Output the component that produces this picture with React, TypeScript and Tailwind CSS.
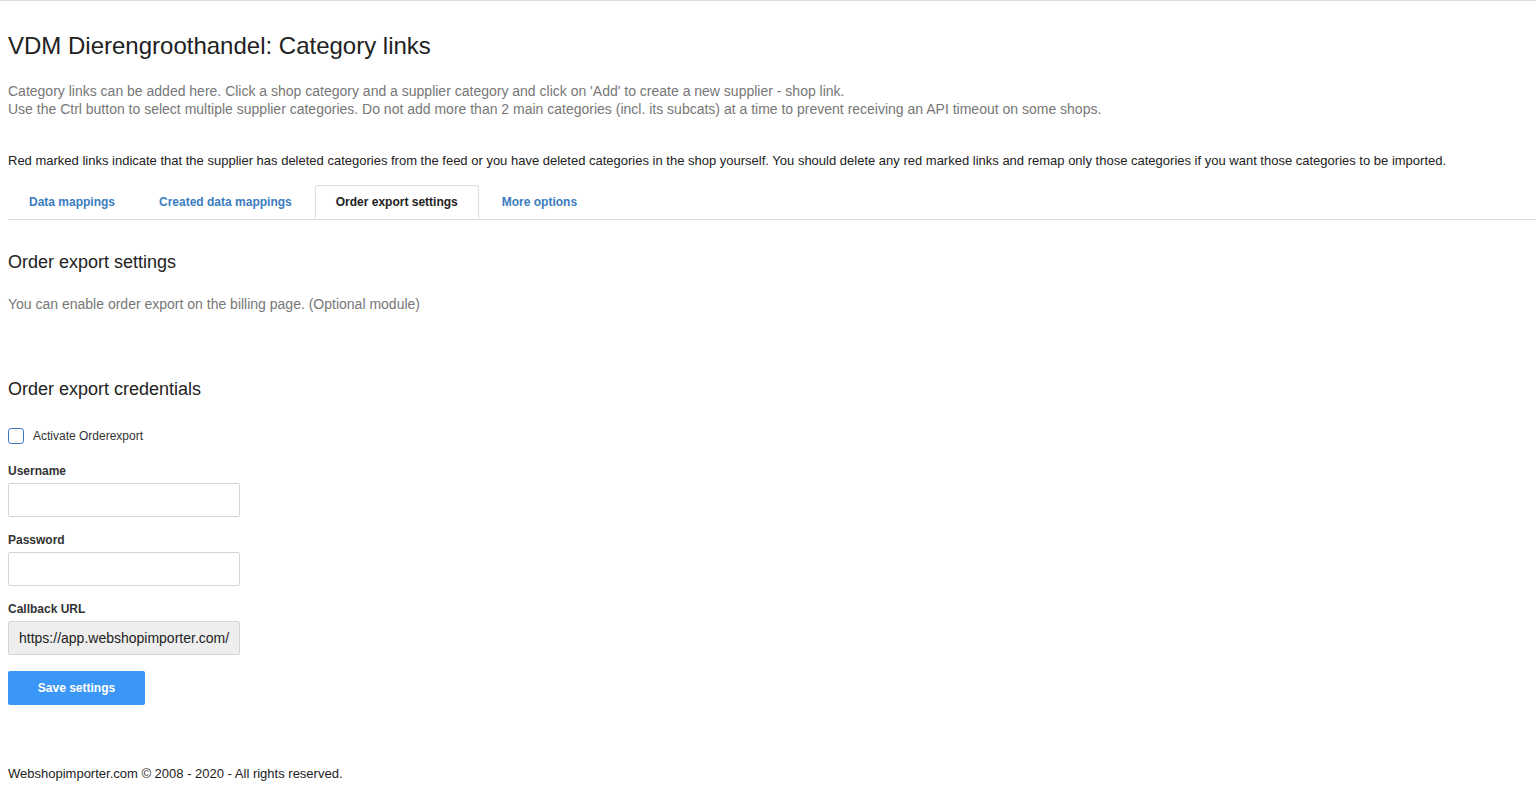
import React from "react";

export default function App() {
  return (
    <div className="min-h-[806px] bg-white border-t border-[#dddddd] font-['Liberation_Sans',Arial,sans-serif] text-[#333333]">
      <div className="px-2">
        <h1 className="pt-[30px] text-[24px] leading-[30px] text-[#222222]">VDM Dierengroothandel: Category links</h1>
        <div className="mt-[21px] text-[14px] leading-[18px] text-[#777777]">
          <p>Category links can be added here. Click a shop category and a supplier category and click on 'Add' to create a new supplier - shop link.</p>
          <p>Use the Ctrl button to select multiple supplier categories. Do not add more than 2 main categories (incl. its subcats) at a time to prevent receiving an API timeout on some shops.</p>
        </div>
        <p className="mt-[35px] text-[13px] leading-[16px] text-[#222222]">
          Red marked links indicate that the supplier has deleted categories from the feed or you have deleted categories in the shop yourself. You should delete any red marked links and remap only those categories if you want those categories to be imported.
        </p>
      </div>
      <div className="ml-2 mt-[16px] flex border-b border-[#dddddd] text-[12px] font-bold">
        <div className="mr-[2px] px-[20px] h-[34px] flex items-center text-[#3a7cc0] border border-transparent">Data mappings</div>
        <div className="mr-[2px] px-[20px] h-[34px] flex items-center text-[#3a7cc0] border border-transparent">Created data mappings</div>
        <div className="mr-[2px] px-[20px] h-[34px] -mb-px flex items-center text-[#222222] bg-white border border-[#dddddd] border-b-white rounded-t-[3px]">Order export settings</div>
        <div className="mr-[2px] px-[20px] h-[34px] flex items-center text-[#3a7cc0] border border-transparent">More options</div>
      </div>
      <div className="px-2">
        <h2 className="mt-[31px] text-[18px] leading-[22px] text-[#222222]">Order export settings</h2>
        <p className="mt-[22px] text-[14px] leading-[18px] text-[#777777]">You can enable order export on the billing page. (Optional module)</p>
        <h2 className="mt-[65px] text-[18px] leading-[22px] text-[#222222]">Order export credentials</h2>
        <label className="mt-[27px] flex items-center gap-[9px] text-[12px] text-[#333333]">
          <span className="w-4 h-4 rounded-[3px] border border-[#3f78c0] bg-white"></span>
          <span>Activate Orderexport</span>
        </label>
        <div className="mt-[19px] text-[12px] font-bold leading-[14px]">Username</div>
        <div className="mt-[5px] w-[232px] h-[34px] border border-[#d4d4d4] rounded-[2px] bg-white"></div>
        <div className="mt-[16px] text-[12px] font-bold leading-[14px]">Password</div>
        <div className="mt-[5px] w-[232px] h-[34px] border border-[#d4d4d4] rounded-[2px] bg-white"></div>
        <div className="mt-[16px] text-[12px] font-bold leading-[14px]">Callback URL</div>
        <div className="mt-[5px] w-[232px] h-[34px] border border-[#d4d4d4] rounded-[2px] bg-[#eeeeee] flex items-center px-[10px] overflow-hidden whitespace-nowrap text-[14px] text-[#222222]">https://app.webshopimporter.com/</div>
        <button className="mt-[16px] w-[137px] h-[34px] rounded-[2px] bg-[#3b97f7] text-white text-[12px] font-bold">Save settings</button>
        <p className="mt-[61px] text-[13px] leading-[16px] text-[#222222]">Webshopimporter.com © 2008 - 2020 - All rights reserved.</p>
      </div>
    </div>
  );
}
